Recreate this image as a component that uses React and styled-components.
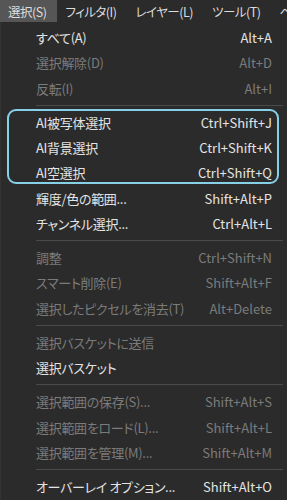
import React from 'react';
import styled, { createGlobalStyle } from 'styled-components';

const GlobalStyle = createGlobalStyle`
  html, body {
    margin: 0;
    padding: 0;
    background: #2b2b2b;
  }
  body {
    font-family: "Noto Sans CJK JP", "Noto Sans", sans-serif;
    font-size: 13px;
    font-feature-settings: "palt";
    color: #e2e2e2;
    overflow: hidden;
  }
`;

const Screen = styled.div`
  width: 287px;
  height: 500px;
  background: #2b2b2b;
  overflow: hidden;
`;

const MenuBar = styled.div`
  display: flex;
  height: 22px;
  background: #2b2b2b;
  white-space: nowrap;
`;

const MenuTitle = styled.div`
  display: flex;
  align-items: center;
  flex-shrink: 0;
  padding: 0 11px 0 8px;
  height: 22px;
  font-size: 12.5px;
  letter-spacing: -0.5px;
  color: #dcdcdc;
  background: ${p => (p.$open ? '#565656' : 'transparent')};
`;

const Dropdown = styled.div`
  padding: 3px 0;
  border-left: 1px solid #333;
`;

const Row = styled.div`
  display: flex;
  align-items: center;
  justify-content: space-between;
  height: 25.25px;
  padding: 0 15px 0 35px;
  color: ${p => (p.$disabled ? '#7b7b7b' : '#e4e4e4')};
  white-space: nowrap;
`;

const Label = styled.span`
  letter-spacing: -0.3px;
`;

const Shortcut = styled.span`
  letter-spacing: 0;
`;

const Separator = styled.div`
  height: 1px;
  margin: 4px 4px 4px 35px;
  background: #4a4a4a;
`;

const Highlight = styled.div`
  position: relative;
  &::after {
    content: '';
    position: absolute;
    top: -1px;
    bottom: 2px;
    left: 6px;
    right: 8px;
    border: 2px solid #86d0e8;
    border-radius: 9px;
    pointer-events: none;
  }
`;

const menus = [
  { label: '選択(S)', open: true },
  { label: 'フィルタ(I)' },
  { label: 'レイヤー(L)' },
  { label: 'ツール(T)' },
  { label: 'ヘルプ(H)' },
];

const Item = ({ label, keys, disabled }) => (
  <Row $disabled={disabled}>
    <Label>{label}</Label>
    <Shortcut>{keys}</Shortcut>
  </Row>
);

export default function App() {
  return (
    <Screen>
      <GlobalStyle />
      <MenuBar>
        {menus.map(m => (
          <MenuTitle key={m.label} $open={m.open}>{m.label}</MenuTitle>
        ))}
      </MenuBar>
      <Dropdown>
        <Item label="すべて(A)" keys="Alt+A" />
        <Item label="選択解除(D)" keys="Alt+D" disabled />
        <Item label="反転(I)" keys="Alt+I" disabled />
        <Separator />
        <Highlight>
          <Item label="AI被写体選択" keys="Ctrl+Shift+J" />
          <Item label="AI背景選択" keys="Ctrl+Shift+K" />
          <Item label="AI空選択" keys="Ctrl+Shift+Q" />
        </Highlight>
        <Item label="輝度/色の範囲..." keys="Shift+Alt+P" />
        <Item label="チャンネル選択..." keys="Ctrl+Alt+L" />
        <Separator />
        <Item label="調整" keys="Ctrl+Shift+N" disabled />
        <Item label="スマート削除(E)" keys="Shift+Alt+F" disabled />
        <Item label="選択したピクセルを消去(T)" keys="Alt+Delete" disabled />
        <Separator />
        <Item label="選択バスケットに送信" disabled />
        <Item label="選択バスケット" />
        <Separator />
        <Item label="選択範囲の保存(S)..." keys="Shift+Alt+S" disabled />
        <Item label="選択範囲をロード(L)..." keys="Shift+Alt+L" disabled />
        <Item label="選択範囲を管理(M)..." keys="Shift+Alt+M" disabled />
        <Separator />
        <Item label="オーバーレイ オプション..." keys="Shift+Alt+O" />
      </Dropdown>
    </Screen>
  );
}
